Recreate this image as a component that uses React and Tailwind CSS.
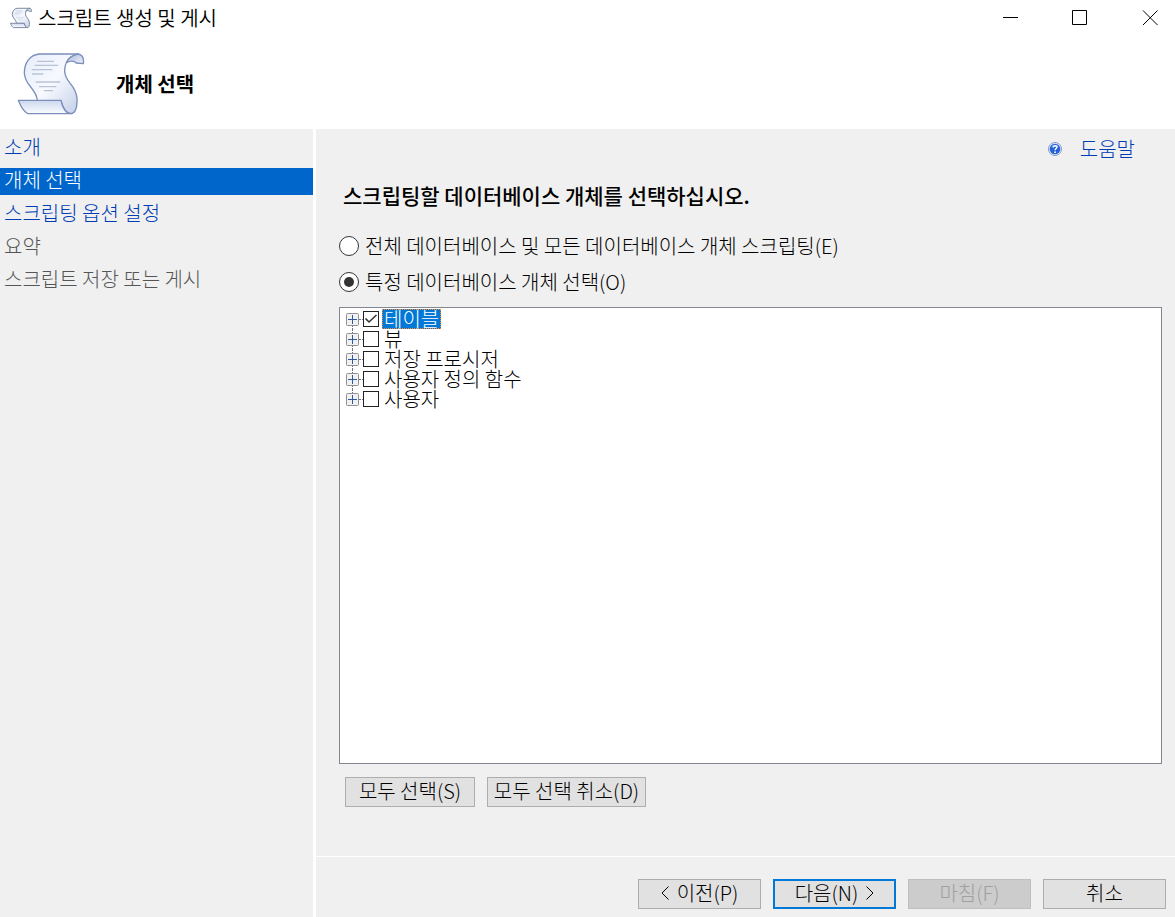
// App.jsx: Script wizard window, "choose objects" step, with step list, object tree and footer navigation.

import React, { useState } from 'react';

const STEPS = [
  { label: '소개', state: 'link' },
  { label: '개체 선택', state: 'current' },
  { label: '스크립팅 옵션 설정', state: 'link' },
  { label: '요약', state: 'disabled' },
  { label: '스크립트 저장 또는 게시', state: 'disabled' },
];

const OBJECTS = ['테이블', '뷰', '저장 프로시저', '사용자 정의 함수', '사용자'];

function ScrollIcon({ className, outline = '#7b8fba', weight = 4 }) {
  return (
    <svg viewBox="52 158 204 190" className={className} fill="none" aria-hidden="true">
      <defs>
        <linearGradient id="paper" x1="0" y1="0" x2="1" y2="1">
          <stop offset="0" stopColor="#e6edfa" />
          <stop offset="0.5" stopColor="#f7f9fe" />
          <stop offset="1" stopColor="#c3cee8" />
        </linearGradient>
        <linearGradient id="roll" x1="0" y1="0" x2="0" y2="1">
          <stop offset="0" stopColor="#cdd8ee" />
          <stop offset="1" stopColor="#fafcff" />
        </linearGradient>
        <linearGradient id="curl" x1="0" y1="0" x2="1" y2="1">
          <stop offset="0" stopColor="#a9b8dc" />
          <stop offset="1" stopColor="#eef2fb" />
        </linearGradient>
      </defs>
      <g stroke={outline} strokeWidth={weight} strokeLinejoin="round">
        <path
          fill="url(#paper)"
          d="M118 163C90 166 74 190 74 220C75 258 110 266 113 302L184 303C190 326 200 342 214 342C230 340 233 322 232 295C228 252 196 250 195 215C195 188 206 172 236 163Z"
        />
        <path fill="url(#curl)" d="M236 163C247 165 253 176 251 192L229 190C225 184 216 182 200 189C206 175 218 166 236 163Z" />
        <path fill="url(#roll)" d="M56 302H184C188 324 199 342 214 342H84C72 336 62 318 56 302Z" />
      </g>
      <path
        stroke="#b9c3d8"
        strokeWidth="4"
        d="M112 185H163M105 197H176M96 210H158M97 223H131M108 247H182M118 261H170M132 273H160"
      />
    </svg>
  );
}

function HelpIcon() {
  return (
    <svg viewBox="0 0 14 14" className="h-3.5 w-3.5" aria-hidden="true">
      <circle cx="7" cy="7" r="6.5" fill="#e6edfa" stroke="#8297c6" />
      <circle cx="7" cy="7" r="5.3" fill="#2460d8" />
      <path d="M3 5.5a4.3 4.3 0 0 1 8 0Q7 3.5 3 5.5" fill="#7ea6f2" />
      <path d="M5.2 5.5C5.3 3.2 9 3.2 8.9 5.3C8.9 6.6 7.1 6.5 7.1 8.2" fill="none" stroke="#fff" strokeWidth="1.4" />
      <circle cx="7.1" cy="10.2" r="0.9" fill="#fff" />
    </svg>
  );
}

function TitleButton({ label, children }) {
  return (
    <button type="button" aria-label={label} className="flex h-9 w-[50px] items-center justify-center hover:bg-gray-200">
      <svg width="16" height="16" viewBox="0 0 16 16" fill="none" stroke="#000" aria-hidden="true">
        {children}
      </svg>
    </button>
  );
}

function Radio({ id, checked, onChange, children }) {
  return (
    <div className="flex h-9 items-center gap-1.5">
      <input
        type="radio"
        name="scope"
        id={id}
        checked={checked}
        onChange={onChange}
        className="grid h-5 w-5 shrink-0 appearance-none place-content-center rounded-full border border-[#333] bg-white before:h-2.5 before:w-2.5 before:rounded-full checked:before:bg-[#333]"
      />
      <label htmlFor={id}>{children}</label>
    </div>
  );
}

function TreeRow({ id, label, first, last, checked, selected, onToggle, onSelect }) {
  return (
    <li className="flex h-5 items-center">
      <div className="flex h-5 w-[13px] flex-col items-center">
        <span className={`w-px flex-1 border-l border-dotted ${first ? 'border-transparent' : 'border-gray-500'}`} />
        <button type="button" aria-label={`${label} 확장`} className="block h-[13px] w-[13px]">
          <svg width="13" height="13" viewBox="0 0 13 13" fill="none" aria-hidden="true">
            <rect x="0.5" y="0.5" width="12" height="12" rx="1" fill="#f1f1f1" stroke="#919191" />
            <path d="M2 6.5H11M6.5 2V11" stroke="#33559f" />
          </svg>
        </button>
        <span className={`w-px flex-1 border-l border-dotted ${last ? 'border-transparent' : 'border-gray-500'}`} />
      </div>
      <span className="w-1 border-t border-dotted border-gray-500" />
      <span className="relative flex h-4 w-4 shrink-0">
        <input
          type="checkbox"
          id={id}
          checked={checked}
          onChange={onToggle}
          className="h-4 w-4 appearance-none border border-[#222] bg-white"
        />
        {checked && (
          <svg viewBox="0 0 16 16" className="pointer-events-none absolute inset-0" fill="none" aria-hidden="true">
            <path d="M2.5 7.5L6 11L13.5 4" stroke="#333" strokeWidth="1.6" />
          </svg>
        )}
      </span>
      <label
        htmlFor={id}
        onClick={onSelect}
        className={`ml-[3px] flex h-5 items-center border border-dotted px-px ${
          selected ? 'border-[#ff8728] bg-[#0078d7] text-white' : 'border-transparent'
        }`}
      >
        {label}
      </label>
    </li>
  );
}

function PushButton({ className = '', primary, disabled, children }) {
  const tone = disabled
    ? 'border border-[#bfbfbf] bg-[#ccc] text-[#a0a0a0]'
    : primary
      ? 'border-2 border-[#0078d7] bg-[#e1e1e1]'
      : 'border border-[#adadad] bg-[#e1e1e1]';
  return (
    <button type="button" disabled={disabled} className={`flex h-[30px] items-center justify-center gap-2 pb-0.5 ${tone} ${className}`}>
      {children}
    </button>
  );
}

function Chevron({ d }) {
  return (
    <svg width="8" height="14" viewBox="0 0 8 14" fill="none" stroke="currentColor" aria-hidden="true">
      <path d={d} />
    </svg>
  );
}

export default function App() {
  const [scope, setScope] = useState('specific');
  const [checked, setChecked] = useState([true, false, false, false, false]);
  const [selected, setSelected] = useState(0);

  const toggle = (i) => setChecked(checked.map((value, n) => (n === i ? !value : value)));

  return (
    <div className="flex min-h-screen flex-col bg-white font-['Noto_Sans_CJK_KR',sans-serif] text-[20px] leading-5 font-light text-black">
      <header>
        <div className="flex h-9 items-center pl-2.5">
          <ScrollIcon className="h-[22px] w-[22px]" outline="#7c889f" weight={9} />
          <span className="ml-1.5 flex-1 font-[350]">스크립트 생성 및 게시</span>
          <div className="flex gap-5">
            <TitleButton label="최소화">
              <path d="M1 7.5H16" />
            </TitleButton>
            <TitleButton label="최대화">
              <path d="M0.5 0.5H14.5V14.5H0.5Z" />
            </TitleButton>
            <TitleButton label="닫기">
              <path d="M1 0.5L15.5 15M15.5 0.5L1 15" />
            </TitleButton>
          </div>
        </div>
        <div className="flex h-[93px] items-center gap-[31px] pt-0.5 pl-[17px]">
          <ScrollIcon className="h-[64px] w-[68px]" />
          <h1 className="font-bold">개체 선택</h1>
        </div>
      </header>

      <div className="flex flex-1 gap-[3px]">
        <nav className="w-[313px] shrink-0 bg-[#f0f0f0] pt-1.5">
          <ul className="flex flex-col gap-1.5">
            {STEPS.map((step) => (
              <li key={step.label}>
                {step.state === 'disabled' ? (
                  <span className="flex h-[27px] items-center px-1 pb-1 text-[#555]">{step.label}</span>
                ) : (
                  <a
                    href="#"
                    aria-current={step.state === 'current' ? 'step' : undefined}
                    className={`flex h-[27px] items-center px-1 pb-1 ${
                      step.state === 'current' ? 'bg-[#0066cc] text-white' : 'text-[#003cb3]'
                    }`}
                  >
                    {step.label}
                  </a>
                )}
              </li>
            ))}
          </ul>
        </nav>

        <div className="flex min-w-0 flex-1 flex-col bg-[#f0f0f0]">
          <main className="flex flex-1 flex-col pt-2 pr-[13px] pb-[49px] pl-[23px]">
            <a href="#" className="mr-[27px] flex h-6 items-center gap-[18px] self-end text-[#003cb3]">
              <HelpIcon />
              도움말
            </a>
            <h2 className="mt-[22px] mb-[21px] ml-1 h-6 text-[21px] leading-6 font-medium">
              스크립팅할 데이터베이스 개체를 선택하십시오.
            </h2>
            <Radio id="scope-all" checked={scope === 'all'} onChange={() => setScope('all')}>
              전체 데이터베이스 및 모든 데이터베이스 개체 스크립팅(E)
            </Radio>
            <Radio id="scope-specific" checked={scope === 'specific'} onChange={() => setScope('specific')}>
              특정 데이터베이스 개체 선택(O)
            </Radio>
            <ul className="mt-[7px] flex-1 border border-[#828790] bg-white py-px pl-1.5">
              {OBJECTS.map((label, i) => (
                <TreeRow
                  key={label}
                  id={`object-${i}`}
                  label={label}
                  first={i === 0}
                  last={i === OBJECTS.length - 1}
                  checked={checked[i]}
                  selected={selected === i}
                  onToggle={() => toggle(i)}
                  onSelect={() => setSelected(i)}
                />
              ))}
            </ul>
            <div className="mt-[13px] flex gap-3 pl-1.5">
              <PushButton className="w-[130px]">모두 선택(S)</PushButton>
              <PushButton className="w-[159px]">모두 선택 취소(D)</PushButton>
            </div>
          </main>

          <footer className="flex justify-end gap-3 border-t border-white pt-[22px] pr-[9px] pb-2">
            <PushButton className="w-[123px]">
              <Chevron d="M7.5 0.5L1 7L7.5 13.5" />
              이전(P)
            </PushButton>
            <PushButton className="w-[123px]" primary>
              다음(N)
              <Chevron d="M0.5 0.5L7 7L0.5 13.5" />
            </PushButton>
            <PushButton className="w-[123px]" disabled>
              마침(F)
            </PushButton>
            <PushButton className="w-[123px]">취소</PushButton>
          </footer>
        </div>
      </div>
    </div>
  );
}
